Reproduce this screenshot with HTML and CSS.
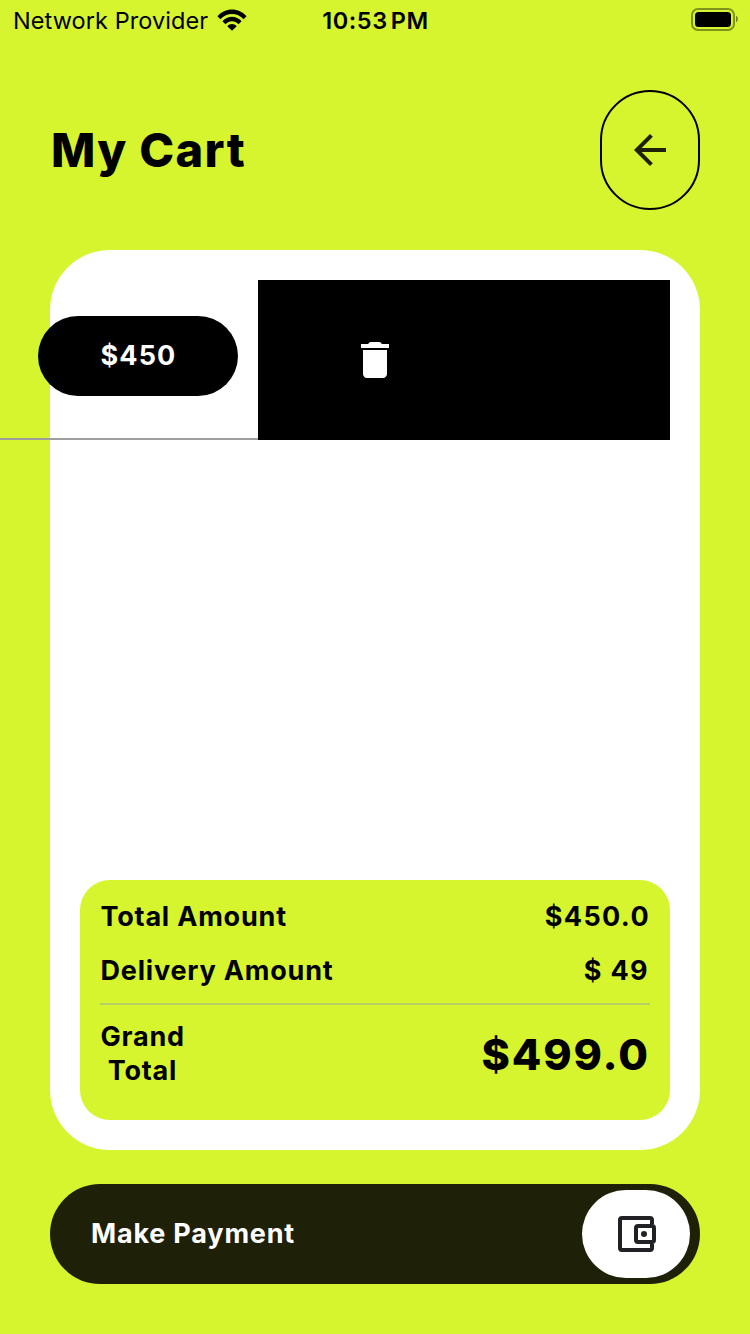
FILE: index.html
```html
<!DOCTYPE html>
<html lang="en">
<head>
<meta charset="utf-8">
<title>My Cart</title>
<link rel="stylesheet" href="styles.css">
</head>
<body>
<div class="screen">
  <div class="status">
    <div class="status-left">
      <span class="carrier">Network Provider</span>
      <svg class="wifi" width="30" height="22" viewBox="0 0 30 22"><path d="M0.4 7.2C8.2-1.9 21.8-1.9 29.6 7.2L26.6 10.2C20.4 3.2 9.6 3.2 3.4 10.2Z"/><path d="M5.4 12.2C10.6 6.2 19.4 6.2 24.6 12.2L21.5 15.3C18 11.3 12 11.3 8.5 15.3Z"/><path d="M10.3 17.2C12.8 14.4 17.2 14.4 19.7 17.2L15 21.8Z"/></svg>
    </div>
    <span class="time">10:53<span class="meridiem">PM</span></span>
    <svg class="battery" width="48" height="24" viewBox="0 0 48 24"><rect x="2" y="2" width="42" height="21" rx="6" fill="none" stroke="#000" stroke-opacity=".4" stroke-width="2"/><rect x="5" y="5" width="36" height="15" rx="3.5"/><path d="M46 8.500C48.500 10 48.500 14 46 15.500Z" fill-opacity=".45"/></svg>
  </div>

  <header class="header">
    <h1 class="title">My Cart</h1>
    <button class="back" aria-label="Back"><svg width="48" height="48" viewBox="0 0 24 24"><path d="M20 11H7.830l5.590-5.590L12 4l-8 8 8 8 1.410-1.410L7.830 13H20v-2z"/></svg></button>
  </header>

  <main class="card">
    <div class="swipe">
      <div class="swipe-action"><svg width="48" height="48" viewBox="0 0 24 24"><path d="M6 19c0 1.100.900 2 2 2h8c1.100 0 2-.900 2-2V7H6v12zM19 4h-3.500l-1-1h-5l-1 1H5v2h14V4z"/></svg></div>
      <div class="item"><div class="price">$450</div></div>
    </div>
    <section class="summary">
      <div class="line"><span class="label">Total Amount</span><span class="amount">$450.0</span></div>
      <div class="line"><span class="label">Delivery Amount</span><span class="amount delivery">$ 49</span></div>
      <div class="rule"></div>
      <div class="line grand"><span class="label grand-label">Grand
 Total</span><span class="grand-amount">$499.0</span></div>
    </section>
  </main>

  <button class="pay">
    <span class="pay-label">Make Payment</span>
    <span class="wallet"><svg width="44" height="44" viewBox="0 0 44 44" fill="none" stroke="#202124" stroke-width="4" stroke-linejoin="round"><path d="M38 12V8Q38 6 36 6H8Q6 6 6 8V36Q6 38 8 38H36Q38 38 38 36V32"/><rect x="22" y="14" width="18" height="16" rx="2"/><circle cx="30" cy="22" r="3" fill="#202124" stroke="none"/></svg></span>
  </button>
</div>
</body>
</html>
```
FILE: styles.css
```css
* { box-sizing: border-box; }
body { margin: 0; background: #d6f52e; font-family: Inter, "Liberation Sans", sans-serif; color: #000; }
button { font: inherit; padding: 0; border: 0; background: none; }
.screen { width: 750px; height: 1334px; overflow: hidden; display: flex; flex-direction: column; }
.status { height: 40px; display: grid; grid-template-columns: 1fr auto 1fr; align-items: center; padding: 0 12px 0 13px; }
.status-left { display: flex; align-items: center; gap: 9px; }
.wifi { margin-bottom: 2px; }
.carrier { font-size: 23.500px; letter-spacing: .08px; line-height: 42px; white-space: nowrap; }
.time { font-size: 23.500px; font-weight: 600; letter-spacing: .6px; line-height: 42px; }
.meridiem { margin-left: 3px; }
.battery { justify-self: end; margin-bottom: 4px; }
.header { height: 120px; margin: 50px 50px 40px; display: flex; justify-content: space-between; align-items: center; }
.title { margin: 0; font-size: 47px; font-weight: 800; letter-spacing: 1.350px; line-height: 60px; padding-left: 1px; }
.back { width: 100px; height: 120px; border: 2px solid #000; border-radius: 50px; display: flex; align-items: center; justify-content: center; fill: #1e2008; }
.card { height: 900px; margin: 0 50px; padding: 30px; background: #fff; border-radius: 60px; display: flex; flex-direction: column; justify-content: space-between; }
.swipe { height: 160px; display: grid; }
.swipe-action, .item { grid-area: 1 / 1; }
.swipe-action { background: #000; clip-path: inset(0 0 0 178px); display: flex; align-items: center; justify-content: center; fill: #fff; }
.item { transform: translateX(-412px); border-bottom: 2px solid #9e9e9e; padding: 36px 20px 0 0; display: flex; justify-content: flex-end; }
.price { width: 200px; height: 80px; border-radius: 40px; background: #000; color: #fff; font-size: 27px; font-weight: 650; letter-spacing: 1.100px; line-height: 79px; text-align: center; padding-left: 1px; }
.summary { height: 240px; padding: 20px; background: #d6f52e; border-radius: 30px; }
.line { height: 34px; margin-bottom: 20px; display: flex; justify-content: space-between; align-items: center; }
.label { font-size: 27px; font-weight: 650; letter-spacing: .8px; line-height: 34px; padding-left: .5px; }
.amount { font-size: 27px; font-weight: 750; letter-spacing: 1.350px; line-height: 34px; }
.delivery { padding-right: 1px; }
.rule { height: 2px; margin-top: -5px; background: #b8cf62; }
.grand { height: 68px; margin: 15px 0 0; }
.grand-label { white-space: pre; }
.grand-amount { font-size: 43px; font-weight: 780; letter-spacing: 1.900px; line-height: 68px; }
.pay { height: 100px; margin: 34px 50px 0; padding: 6px 10px 6px 41px; border-radius: 50px; background: #1e2008; display: flex; align-items: center; justify-content: space-between; }
.pay-label { color: #fff; font-size: 27px; font-weight: 650; letter-spacing: .8px; padding-bottom: 2px; }
.wallet { width: 108px; height: 88px; border-radius: 44px; background: #fff; display: flex; align-items: center; justify-content: center; }
```
